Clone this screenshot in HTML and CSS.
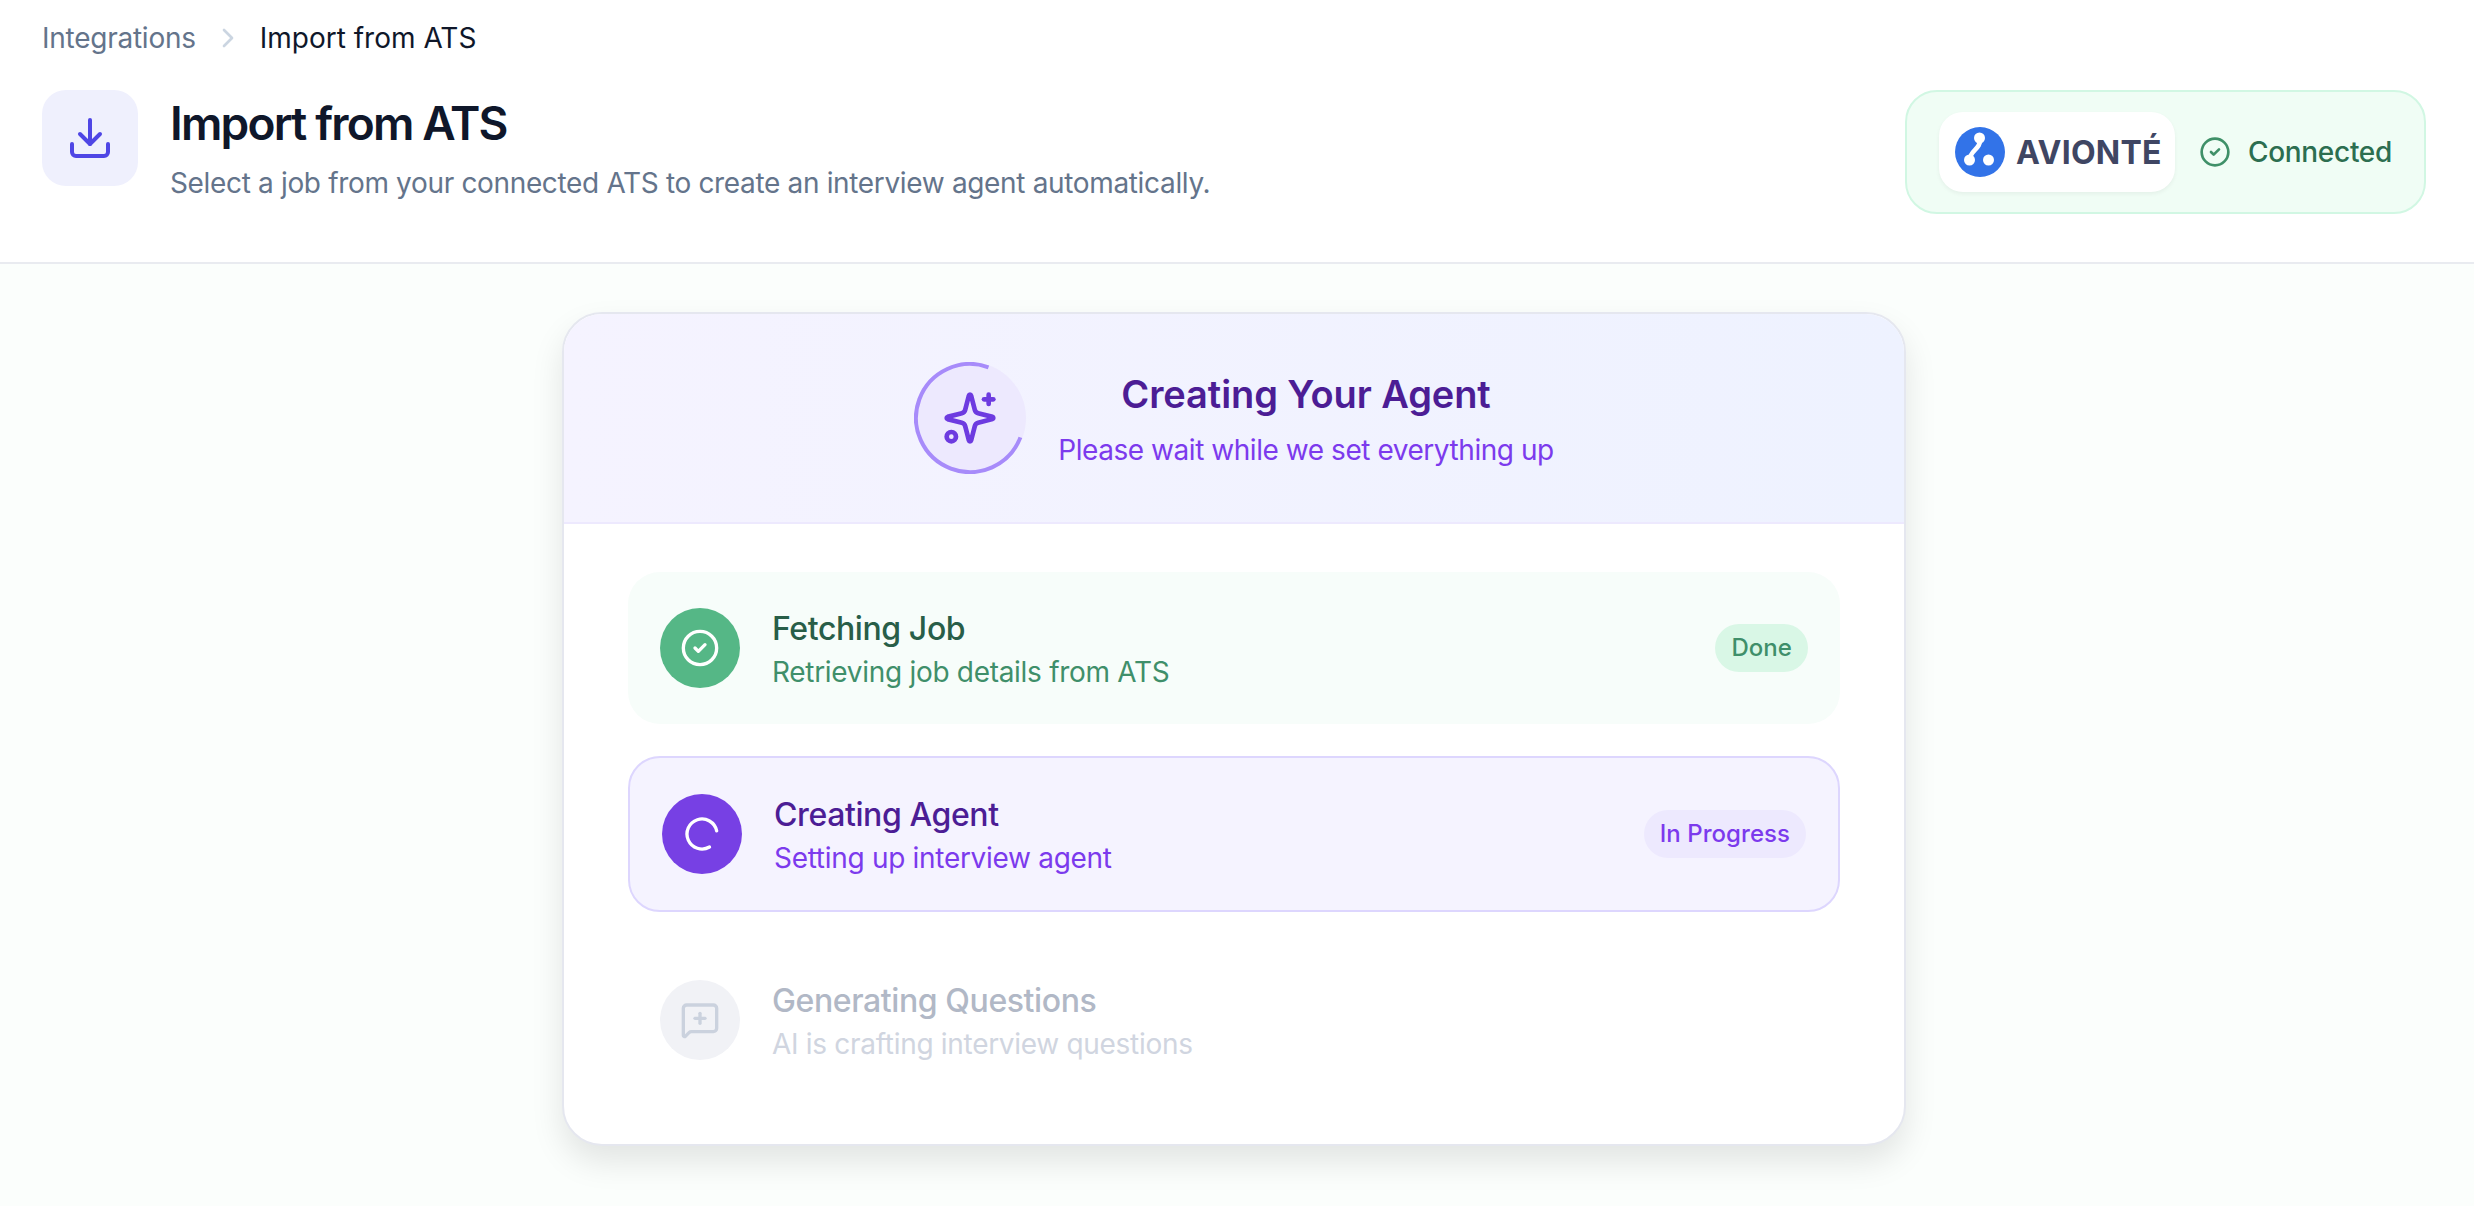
FILE: index.html
```html
<!DOCTYPE html>
<html lang="en">
<head>
    <meta charset="UTF-8">
    <meta name="viewport" content="width=device-width, initial-scale=1.0">
    <title>Import from ATS</title>
    <link rel="stylesheet" href="styles.css">
</head>
<body>
    <header class="page-header">
        <nav class="breadcrumb">
            <span class="breadcrumb-link">Integrations</span>
            <svg class="breadcrumb-chevron" viewBox="0 0 24 24"><path d="m9 18 6-6-6-6"/></svg>
            <span class="breadcrumb-current">Import from ATS</span>
        </nav>
        <div class="header-row">
            <div class="header-left">
                <div class="header-icon">
                    <svg viewBox="0 0 24 24"><path d="M12 15V3"/><path d="M21 15v4a2 2 0 0 1-2 2H5a2 2 0 0 1-2-2v-4"/><path d="m7 10 5 5 5-5"/></svg>
                </div>
                <div class="header-text">
                    <h1>Import from ATS</h1>
                    <p class="header-sub">Select a job from your connected ATS to create an interview agent automatically.</p>
                </div>
            </div>
            <div class="connected-badge">
                <div class="logo-box">
                    <svg class="logo-mark" viewBox="0 0 50 50">
                        <circle cx="25" cy="25" r="25" fill="#3273e8"/>
                        <path d="M25 12 C 26 22, 15 23, 14.5 33" fill="none" stroke="#fff" stroke-width="4.5"/>
                        <circle cx="24.5" cy="11" r="5.5" fill="#fff"/>
                        <circle cx="14.5" cy="33" r="5.5" fill="#fff"/>
                        <circle cx="33.5" cy="33" r="5.5" fill="#fff"/>
                    </svg>
                    <span class="logo-text">AVIONTÉ</span>
                </div>
                <svg class="connected-icon" viewBox="0 0 24 24"><circle cx="12" cy="12" r="10"/><path d="m9 12 2 2 4-4"/></svg>
                <span class="connected-text">Connected</span>
            </div>
        </div>
    </header>

    <main class="page-main">
        <section class="progress-card">
            <div class="progress-head">
                <svg class="spark-ring" viewBox="0 0 112 112">
                    <circle cx="56" cy="56" r="56" fill="#ede9fe"/>
                    <path d="M106.4 75.4A54 54 0 1 1 74.5 5.3" fill="none" stroke="#a78bfa" stroke-width="4" stroke-linecap="butt"/>
                    <g transform="translate(28 28) scale(2.3333)" fill="none" stroke="#6d3be0" stroke-width="2" stroke-linecap="round" stroke-linejoin="round">
                        <path d="M9.937 15.5A2 2 0 0 0 8.5 14.063l-6.135-1.582a.5.5 0 0 1 0-.962L8.5 9.936A2 2 0 0 0 9.937 8.5l1.582-6.135a.5.5 0 0 1 .963 0L14.063 8.5A2 2 0 0 0 15.5 9.937l6.135 1.581a.5.5 0 0 1 0 .964L15.5 14.063a2 2 0 0 0-1.437 1.437l-1.582 6.135a.5.5 0 0 1-.963 0z"/>
                        <path d="M20 2v4"/><path d="M22 4h-4"/><circle cx="4" cy="20" r="2"/>
                    </g>
                </svg>
                <div class="progress-head-text">
                    <h2>Creating Your Agent</h2>
                    <p>Please wait while we set everything up</p>
                </div>
            </div>

            <div class="step-list">
                <div class="step step-done">
                    <div class="step-icon">
                        <svg viewBox="0 0 24 24"><circle cx="12" cy="12" r="10"/><path d="m9 12 2 2 4-4"/></svg>
                    </div>
                    <div class="step-text">
                        <div class="step-title">Fetching Job</div>
                        <div class="step-sub">Retrieving job details from ATS</div>
                    </div>
                    <span class="step-badge">Done</span>
                </div>

                <div class="step step-active">
                    <div class="step-icon">
                        <svg class="spinner" viewBox="0 0 24 24"><path d="M21 12a9 9 0 1 1-6.219-8.56"/></svg>
                    </div>
                    <div class="step-text">
                        <div class="step-title">Creating Agent</div>
                        <div class="step-sub">Setting up interview agent</div>
                    </div>
                    <span class="step-badge">In Progress</span>
                </div>

                <div class="step step-pending">
                    <div class="step-icon">
                        <svg viewBox="0 0 24 24"><path d="M22 17a2 2 0 0 1-2 2H6.828a2 2 0 0 0-1.414.586l-2.202 2.202A.71.71 0 0 1 2 21.286V5a2 2 0 0 1 2-2h16a2 2 0 0 1 2 2z"/><path d="M12 8v6"/><path d="M9 11h6"/></svg>
                    </div>
                    <div class="step-text">
                        <div class="step-title">Generating Questions</div>
                        <div class="step-sub">AI is crafting interview questions</div>
                    </div>
                </div>
            </div>
        </section>
    </main>
</body>
</html>
```

FILE: styles.css
```css
* {
    box-sizing: border-box;
}

html, body {
    height: 100%;
}

body {
    margin: 0;
    padding-right: 6px;
    font-family: Inter, "Noto Sans", Arial, sans-serif;
    background-color: #fbfefc;
    color: #0f172a;
    overflow: hidden;
}

svg {
    display: block;
    fill: none;
    stroke: currentColor;
    stroke-width: 2;
    stroke-linecap: round;
    stroke-linejoin: round;
}

h1, h2, p {
    margin: 0;
}

/* header */
.page-header {
    margin-right: -6px;
    padding: 22px 48px 48px 42px;
    background-color: #ffffff;
    border-bottom: 2px solid #e9ebf0;
}

.breadcrumb {
    display: flex;
    align-items: center;
    gap: 16px;
    height: 32px;
    margin-bottom: 36px;
    font-size: 28px;
    color: #64748b;
}

.breadcrumb-link {
    letter-spacing: -0.25px;
}

.breadcrumb-chevron {
    width: 32px;
    height: 32px;
    color: #cbd5e1;
}

.breadcrumb-current {
    color: #0f172a;
}

.header-row {
    display: flex;
    justify-content: space-between;
    align-items: flex-start;
}

.header-left {
    display: flex;
    gap: 32px;
}

.header-icon {
    display: flex;
    align-items: center;
    justify-content: center;
    width: 96px;
    height: 96px;
    border-radius: 24px;
    background-color: #eff0fd;
    color: #4f46e5;
}

.header-icon svg {
    width: 48px;
    height: 48px;
}

.header-text {
    padding-top: 5px;
}

h1 {
    font-size: 46px;
    line-height: 56px;
    font-weight: 600;
    letter-spacing: -1.8px;
    color: #0f172a;
}

.header-sub {
    margin-top: 12px;
    font-size: 28px;
    line-height: 40px;
    letter-spacing: -0.34px;
    color: #64748b;
}

.connected-badge {
    display: flex;
    align-items: center;
    padding: 20px 32px;
    border: 2px solid #d1f7e3;
    border-radius: 32px;
    background-color: #f0fdf5;
}

.logo-box {
    display: flex;
    align-items: center;
    gap: 11px;
    width: 236px;
    height: 80px;
    margin-right: 24px;
    padding-left: 16px;
    border-radius: 24px;
    background-color: #ffffff;
    box-shadow: 0 2px 4px rgba(0, 0, 0, 0.05);
}

.logo-mark {
    width: 50px;
    height: 50px;
    stroke: none;
}

.logo-text {
    font-size: 32px;
    font-weight: 700;
    letter-spacing: 0.25px;
    color: #3f4663;
}

.connected-icon {
    width: 32px;
    height: 32px;
    margin-right: 17px;
    color: #3f9068;
}

.connected-text {
    font-size: 28px;
    font-weight: 450;
    letter-spacing: -0.3px;
    color: #2c6e50;
}

/* main card */
.page-main {
    display: flex;
    justify-content: center;
    padding-top: 48px;
}

.progress-card {
    width: 1344px;
    border: 2px solid #e5e7ef;
    border-radius: 40px;
    background-color: #ffffff;
    box-shadow: 0 16px 32px rgba(0, 0, 0, 0.1);
    overflow: hidden;
}

.progress-head {
    display: flex;
    justify-content: center;
    align-items: center;
    gap: 32px;
    padding: 48px;
    background: linear-gradient(90deg, #f5f3ff, #eef2ff);
    border-bottom: 2px solid #ede9fe;
}

.spark-ring {
    width: 112px;
    height: 112px;
    stroke: none;
}

.progress-head-text {
    padding-top: 3px;
    text-align: center;
}

.progress-head-text h2 {
    font-size: 38px;
    line-height: 48px;
    font-weight: 600;
    letter-spacing: -0.1px;
    color: #4c1d95;
}

.progress-head-text p {
    margin-top: 12px;
    font-size: 28px;
    line-height: 40px;
    letter-spacing: -0.45px;
    color: #7c3aed;
}

/* steps */
.step-list {
    display: flex;
    flex-direction: column;
    gap: 32px;
    padding: 48px 64px;
}

.step {
    display: flex;
    align-items: center;
    gap: 32px;
    padding: 32px;
    border-radius: 32px;
}

.step-icon {
    display: flex;
    align-items: center;
    justify-content: center;
    flex-shrink: 0;
    width: 80px;
    height: 80px;
    border-radius: 50%;
}

.step-icon svg {
    width: 40px;
    height: 40px;
}

.step-text {
    flex: 1;
}

.step-title {
    padding-top: 2px;
    font-size: 32px;
    line-height: 46px;
    font-weight: 450;
    letter-spacing: -0.4px;
}

.step-sub {
    font-size: 28px;
    line-height: 40px;
    letter-spacing: -0.3px;
}

.step-badge {
    padding: 8px 16px;
    border-radius: 24px;
    font-size: 24px;
    line-height: 32px;
    font-weight: 450;
    letter-spacing: 0.05px;
}

.step-done {
    background-color: #f7fdfa;
}

.step-done .step-icon {
    background-color: #55b786;
    color: #ffffff;
}

.step-done .step-title {
    color: #285e48;
}

.step-done .step-sub {
    color: #3f8f6a;
}

.step-done .step-badge {
    background-color: #d9f7e6;
    color: #3f8f6a;
}

.step-active {
    background-color: #f5f3ff;
    border: 2px solid #ddd6fe;
}

.step-active .step-icon {
    background-color: #7740e4;
    color: #ffffff;
}

.spinner {
    transform: rotate(60deg);
}

.step-active .step-title {
    color: #4c1d95;
}

.step-active .step-sub, .step-active .step-badge {
    color: #7c3aed;
}

.step-active .step-badge {
    background-color: #ede9fe;
}

.step-pending .step-icon {
    background-color: #f1f2f6;
    color: #cbd2de;
}

.step-pending .step-title {
    color: #b1b8c6;
}

.step-pending .step-sub {
    color: #d0d5e0;
}
```
